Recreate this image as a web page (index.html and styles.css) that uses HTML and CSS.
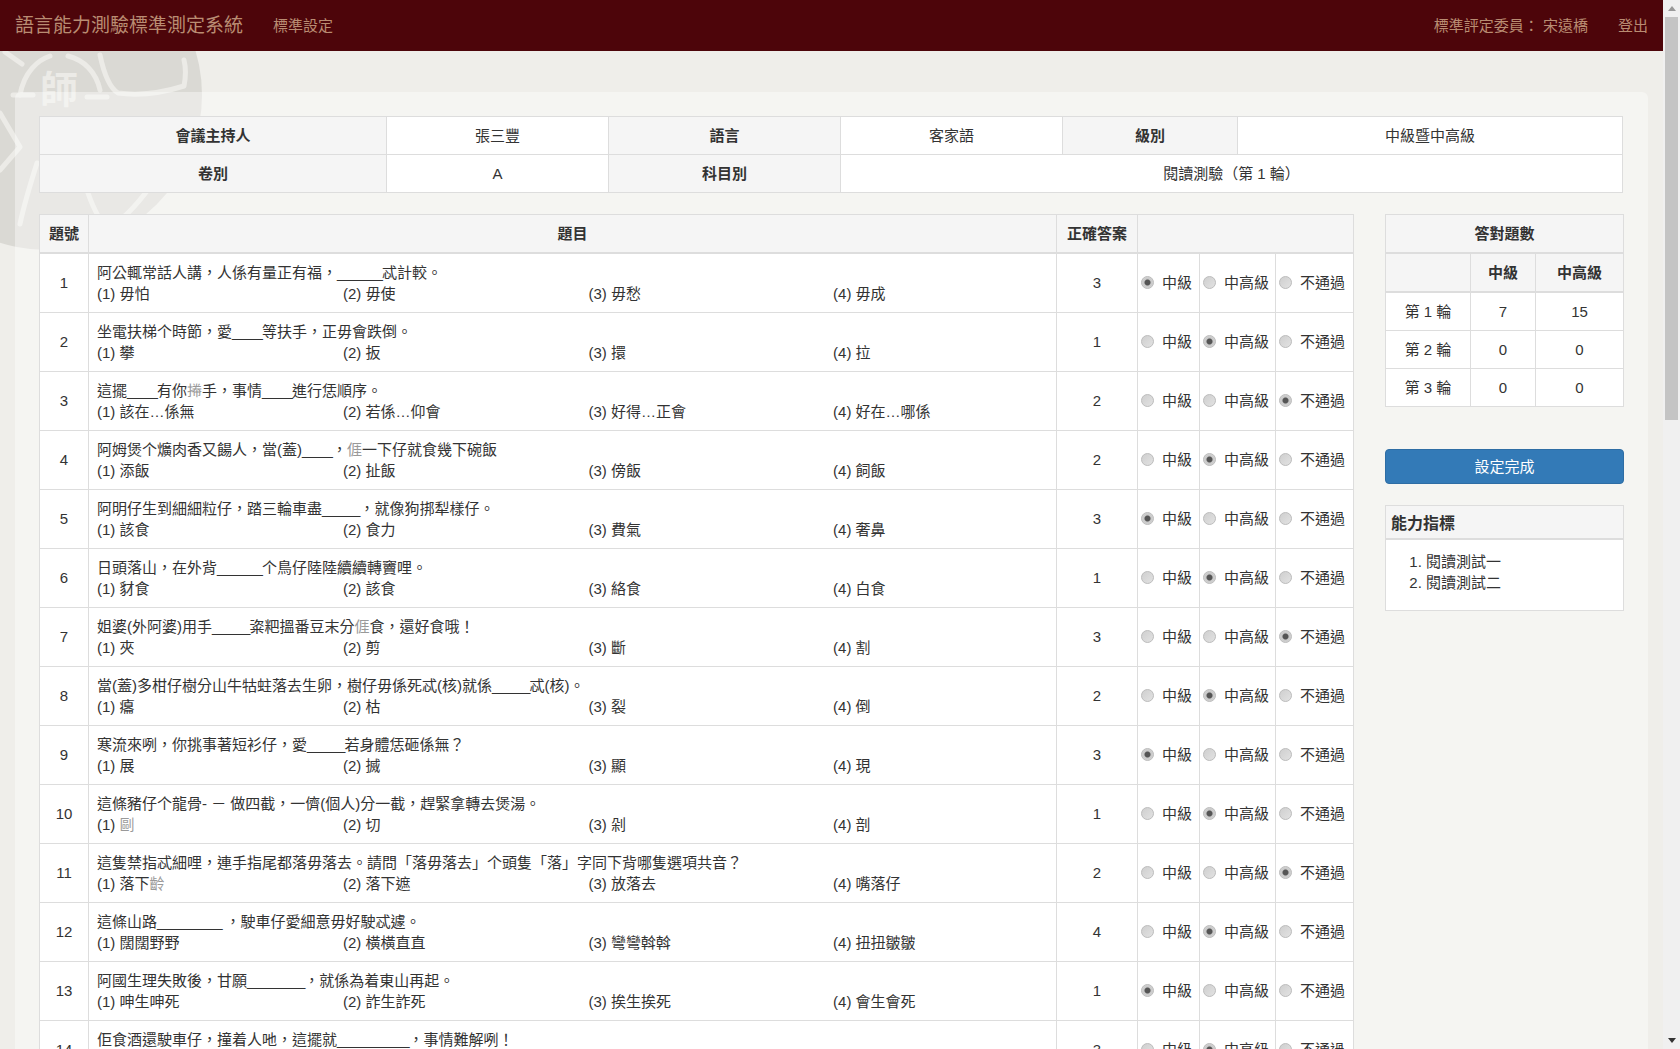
FILE: index.html
```html
<!DOCTYPE html>
<html lang="zh-Hant">
<head>
    <meta charset="UTF-8">
    <meta name="viewport" content="width=device-width, initial-scale=1.0">
    <title>語言能力測驗標準測定系統</title>
    <link rel="stylesheet" href="styles.css">
</head>
<body>
    <!-- school seal behind the page -->
    <svg class="seal" width="210" height="260" viewBox="0 0 210 260" aria-hidden="true">
        <circle cx="47" cy="95" r="155" fill="#dad9d4"/>
        <g fill="none" stroke="#ecebe7" stroke-width="5" stroke-linecap="round" stroke-linejoin="round">
            <path d="M20 95 C24 72 38 60 50 56"/>
            <path d="M68 56 C84 60 96 72 100 90"/>
            <path d="M13 95 H33"/>
            <path d="M87 97 H107"/>
            <path d="M100 55 C104 74 110 88 118 93 C140 96 165 92 184 86 C186 76 186 68 184 60"/>
            <path d="M0 113 L20 147 L0 170"/>
            <path d="M37 163 C30 185 24 205 20 224"/>
            <path d="M88 193 C94 210 100 222 108 228 C120 222 136 206 150 187"/>
            <path d="M5 52 L22 64"/>
            <path d="M72 125 H125"/>
        </g>
        <text class="seal-char" x="40" y="103">師</text>
    </svg>

    <div class="page">
        <nav class="navbar">
            <a class="brand" href="#">語言能力測驗標準測定系統</a>
            <a class="nav-link" href="#">標準設定</a>
            <div class="nav-right">
                <span class="nav-link">標準評定委員： 宋遠橋</span>
                <a class="nav-link" href="#">登出</a>
            </div>
        </nav>

        <div class="panel">
            <table class="grid info-table">
                <colgroup>
                    <col class="i1"><col class="i2"><col class="i3"><col class="i4"><col class="i5"><col>
                </colgroup>
                <tr>
                    <th>會議主持人</th><td>張三豐</td>
                    <th>語言</th><td>客家語</td>
                    <th>級別</th><td>中級暨中高級</td>
                </tr>
                <tr>
                    <th>卷別</th><td>A</td>
                    <th>科目別</th><td colspan="3">閱讀測驗（第 1 輪）</td>
                </tr>
            </table>

            <div class="content">
                <table class="grid question-table">
                    <colgroup>
                        <col class="q-no"><col><col class="q-ans"><col class="q-r1"><col class="q-r2"><col class="q-r3">
                    </colgroup>
                    <thead>
                        <tr><th>題號</th><th>題目</th><th>正確答案</th><th colspan="3"></th></tr>
                    </thead>
                    <tbody>
                        <tr>
                            <td>1</td>
                            <td class="question">阿公輒常話人講，人係有量正有福，<span class="blank">______</span>忒計較。
                                <div class="options"><span>(1) 毋怕</span><span>(2) 毋使</span><span>(3) 毋愁</span><span>(4) 毋成</span></div></td>
                            <td>3</td>
                            <td class="level"><label><input type="radio" name="q1" checked>中級</label></td>
                            <td class="level"><label><input type="radio" name="q1">中高級</label></td>
                            <td class="level"><label><input type="radio" name="q1">不通過</label></td>
                        </tr>
                        <tr>
                            <td>2</td>
                            <td class="question">坐電扶梯个時節，愛<span class="blank">____</span>等扶手，正毋會跌倒。
                                <div class="options"><span>(1) 攀</span><span>(2) 扳</span><span>(3) 擐</span><span>(4) 拉</span></div></td>
                            <td>1</td>
                            <td class="level"><label><input type="radio" name="q2">中級</label></td>
                            <td class="level"><label><input type="radio" name="q2" checked>中高級</label></td>
                            <td class="level"><label><input type="radio" name="q2">不通過</label></td>
                        </tr>
                        <tr>
                            <td>3</td>
                            <td class="question">這擺<span class="blank">____</span>有你<span class="rare">𢯭</span>手，事情<span class="blank">____</span>進行恁順序。
                                <div class="options"><span>(1) 該在…係無</span><span>(2) 若係…仰會</span><span>(3) 好得…正會</span><span>(4) 好在…哪係</span></div></td>
                            <td>2</td>
                            <td class="level"><label><input type="radio" name="q3">中級</label></td>
                            <td class="level"><label><input type="radio" name="q3">中高級</label></td>
                            <td class="level"><label><input type="radio" name="q3" checked>不通過</label></td>
                        </tr>
                        <tr>
                            <td>4</td>
                            <td class="question">阿姆煲个爌肉香又餳人，當(蓋)<span class="blank">____</span>，<span class="rare">𠊎</span>一下仔就食幾下碗飯
                                <div class="options"><span>(1) 添飯</span><span>(2) 扯飯</span><span>(3) 傍飯</span><span>(4) 飼飯</span></div></td>
                            <td>2</td>
                            <td class="level"><label><input type="radio" name="q4">中級</label></td>
                            <td class="level"><label><input type="radio" name="q4" checked>中高級</label></td>
                            <td class="level"><label><input type="radio" name="q4">不通過</label></td>
                        </tr>
                        <tr>
                            <td>5</td>
                            <td class="question">阿明仔生到細細粒仔，踏三輪車盡<span class="blank">_____</span>，就像狗挷犁樣仔。
                                <div class="options"><span>(1) 該食</span><span>(2) 食力</span><span>(3) 費氣</span><span>(4) 奢鼻</span></div></td>
                            <td>3</td>
                            <td class="level"><label><input type="radio" name="q5" checked>中級</label></td>
                            <td class="level"><label><input type="radio" name="q5">中高級</label></td>
                            <td class="level"><label><input type="radio" name="q5">不通過</label></td>
                        </tr>
                        <tr>
                            <td>6</td>
                            <td class="question">日頭落山，在外背<span class="blank">______</span>个鳥仔陸陸續續轉竇哩。
                                <div class="options"><span>(1) 豺食</span><span>(2) 該食</span><span>(3) 絡食</span><span>(4) 白食</span></div></td>
                            <td>1</td>
                            <td class="level"><label><input type="radio" name="q6">中級</label></td>
                            <td class="level"><label><input type="radio" name="q6" checked>中高級</label></td>
                            <td class="level"><label><input type="radio" name="q6">不通過</label></td>
                        </tr>
                        <tr>
                            <td>7</td>
                            <td class="question">姐婆(外阿婆)用手<span class="blank">_____</span>粢粑搵番豆末分<span class="rare">𠊎</span>食，還好食哦！
                                <div class="options"><span>(1) 夾</span><span>(2) 剪</span><span>(3) 斷</span><span>(4) 割</span></div></td>
                            <td>3</td>
                            <td class="level"><label><input type="radio" name="q7">中級</label></td>
                            <td class="level"><label><input type="radio" name="q7">中高級</label></td>
                            <td class="level"><label><input type="radio" name="q7" checked>不通過</label></td>
                        </tr>
                        <tr>
                            <td>8</td>
                            <td class="question">當(蓋)多柑仔樹分山牛牯蛀落去生卵，樹仔毋係死忒(核)就係<span class="blank">_____</span>忒(核)。
                                <div class="options"><span>(1) 癟</span><span>(2) 枯</span><span>(3) 裂</span><span>(4) 倒</span></div></td>
                            <td>2</td>
                            <td class="level"><label><input type="radio" name="q8">中級</label></td>
                            <td class="level"><label><input type="radio" name="q8" checked>中高級</label></td>
                            <td class="level"><label><input type="radio" name="q8">不通過</label></td>
                        </tr>
                        <tr>
                            <td>9</td>
                            <td class="question">寒流來咧，你挑事著短衫仔，愛<span class="blank">_____</span>若身體恁砸係無？
                                <div class="options"><span>(1) 展</span><span>(2) 搣</span><span>(3) 顯</span><span>(4) 現</span></div></td>
                            <td>3</td>
                            <td class="level"><label><input type="radio" name="q9" checked>中級</label></td>
                            <td class="level"><label><input type="radio" name="q9">中高級</label></td>
                            <td class="level"><label><input type="radio" name="q9">不通過</label></td>
                        </tr>
                        <tr>
                            <td>10</td>
                            <td class="question">這條豬仔个龍骨- － 做四截，一儕(個人)分一截，趕緊拿轉去煲湯。
                                <div class="options"><span>(1) <span class="rare">剾</span></span><span>(2) 切</span><span>(3) 剁</span><span>(4) 剖</span></div></td>
                            <td>1</td>
                            <td class="level"><label><input type="radio" name="q10">中級</label></td>
                            <td class="level"><label><input type="radio" name="q10" checked>中高級</label></td>
                            <td class="level"><label><input type="radio" name="q10">不通過</label></td>
                        </tr>
                        <tr>
                            <td>11</td>
                            <td class="question">這隻禁指忒細哩，連手指尾都落毋落去。請問「落毋落去」个頭隻「落」字同下背哪隻選項共音？
                                <div class="options"><span>(1) 落下<span class="rare">齡</span></span><span>(2) 落下遮</span><span>(3) 放落去</span><span>(4) 嘴落仔</span></div></td>
                            <td>2</td>
                            <td class="level"><label><input type="radio" name="q11">中級</label></td>
                            <td class="level"><label><input type="radio" name="q11">中高級</label></td>
                            <td class="level"><label><input type="radio" name="q11" checked>不通過</label></td>
                        </tr>
                        <tr>
                            <td>12</td>
                            <td class="question">這條山路<span class="blank-long">_________</span> ，駛車仔愛細意毋好駛忒遽。
                                <div class="options"><span>(1) 闊闊野野</span><span>(2) 橫橫直直</span><span>(3) 彎彎斡斡</span><span>(4) 扭扭皺皺</span></div></td>
                            <td>4</td>
                            <td class="level"><label><input type="radio" name="q12">中級</label></td>
                            <td class="level"><label><input type="radio" name="q12" checked>中高級</label></td>
                            <td class="level"><label><input type="radio" name="q12">不通過</label></td>
                        </tr>
                        <tr>
                            <td>13</td>
                            <td class="question">阿國生理失敗後，甘願<span class="blank-long">________</span>，就係為着東山再起。
                                <div class="options"><span>(1) 呻生呻死</span><span>(2) 詐生詐死</span><span>(3) 挨生挨死</span><span>(4) 會生會死</span></div></td>
                            <td>1</td>
                            <td class="level"><label><input type="radio" name="q13" checked>中級</label></td>
                            <td class="level"><label><input type="radio" name="q13">中高級</label></td>
                            <td class="level"><label><input type="radio" name="q13">不通過</label></td>
                        </tr>
                        <tr>
                            <td>14</td>
                            <td class="question">佢食酒還駛車仔，撞着人吔，這擺就<span class="blank-long">__________</span>，事情難解咧！
                                <div class="options"></div></td>
                            <td>3</td>
                            <td class="level"><label><input type="radio" name="q14">中級</label></td>
                            <td class="level"><label><input type="radio" name="q14" checked>中高級</label></td>
                            <td class="level"><label><input type="radio" name="q14">不通過</label></td>
                        </tr>
                    </tbody>
                </table>

                <aside class="sidebar">
                    <table class="grid score-table">
                        <colgroup><col class="s1"><col class="s2"><col></colgroup>
                        <thead>
                            <tr><th colspan="3">答對題數</th></tr>
                            <tr><th></th><th>中級</th><th>中高級</th></tr>
                        </thead>
                        <tbody>
                            <tr><td>第 1 輪</td><td>7</td><td>15</td></tr>
                            <tr><td>第 2 輪</td><td>0</td><td>0</td></tr>
                            <tr><td>第 3 輪</td><td>0</td><td>0</td></tr>
                        </tbody>
                    </table>

                    <button class="btn-done" type="button">設定完成</button>

                    <div class="indicator">
                        <div class="indicator-heading">能力指標</div>
                        <ol class="indicator-list">
                            <li>閱讀測試一</li>
                            <li>閱讀測試二</li>
                        </ol>
                    </div>
                </aside>
            </div>
        </div>
    </div>

    <!-- window scrollbar as in the screenshot -->
    <div class="scrollbar" aria-hidden="true">
        <div class="sb-button"><span class="sb-up"></span></div>
        <div class="sb-thumb"></div>
        <div class="sb-button sb-end"><span class="sb-down"></span></div>
    </div>
</body>
</html>
```

FILE: styles.css
```css
body {
    display: flex;
    height: 100vh;
    overflow: hidden;
    font-family: "Liberation Sans", "Noto Sans CJK TC", sans-serif;
    font-size: 15px;
    line-height: 21px;
    color: #333;
    margin: 0;
    background-color: #efeeea;
}

.page {
    flex: 1;
    min-width: 0;
    overflow: hidden;
}

.seal {
    position: absolute;
    top: 0;
    left: 0;
    z-index: -1;
}

.seal-char {
    font-size: 38px;
    font-weight: 700;
    fill: #ecebe7;
}

.scrollbar {
    display: flex;
    flex-direction: column;
    flex: none;
    width: 17px;
    background-color: #f0f0f0;
}

.sb-button {
    display: flex;
    align-items: center;
    justify-content: center;
    height: 17px;
}

.sb-end {
    margin-top: auto;
}

.sb-up {
    border-left: 4.5px solid transparent;
    border-right: 4.5px solid transparent;
    border-bottom: 5px solid #999;
}

.sb-down {
    border-left: 4.5px solid transparent;
    border-right: 4.5px solid transparent;
    border-top: 5px solid #333;
}

.sb-thumb {
    height: 403px;
    margin: 0 2px;
    background-color: #c4c4c4;
}

.navbar {
    display: flex;
    align-items: center;
    height: 51px;
    padding: 0 15px;
    background-color: #4d050a;
}

.brand {
    font-size: 19px;
    color: #b98c72;
    text-decoration: none;
    margin-right: 30px;
}

.nav-link {
    color: #b98c72;
    text-decoration: none;
}

.nav-right {
    display: flex;
    gap: 30px;
    margin-left: auto;
}

.panel {
    margin: 41px 15px 0;
    padding: 24px 24px;
    background-color: rgba(255, 255, 255, 0.4);
    border-radius: 6px 6px 0 0;
}

.grid {
    border-collapse: collapse;
    table-layout: fixed;
    background-color: #fff;
}

.grid th,
.grid td {
    padding: 8px;
    border: 1px solid #ddd;
    text-align: center;
    vertical-align: middle;
}

.grid th {
    background-color: #f5f5f5;
    font-weight: 700;
}

.grid thead th {
    border-bottom-width: 2px;
}

.info-table {
    width: 1584px;
}

.i1 { width: 347px; }
.i2 { width: 222px; }
.i3 { width: 232px; }
.i4 { width: 222px; }
.i5 { width: 175px; }

.content {
    display: flex;
    align-items: flex-start;
    gap: 31px;
    width: 1585px;
    margin-top: 21px;
}

.question-table {
    width: 1315px;
    flex: none;
}

.q-no { width: 49px; }
.q-ans { width: 81px; }
.q-r1 { width: 62px; }
.q-r2 { width: 76px; }
.q-r3 { width: 78px; }

/* numbers and radios sit a pixel above the row centre */
.question-table tbody td {
    padding: 7px 8px 9px;
}

.question-table tbody td.question {
    padding: 8px;
    text-align: left;
}

.options {
    display: grid;
    grid-template-columns: 246px 245.5px 244.6px 1fr;
    min-height: 21px;
}

.blank {
    letter-spacing: -0.84px;
}

.blank-long {
    letter-spacing: -1.2px;
}

.rare {
    color: #999;
}

.question-table tbody td.level {
    padding: 7px 3px 9px;
    text-align: left;
    white-space: nowrap;
}

.level label {
    display: flex;
    align-items: center;
    gap: 8px;
}

.level input {
    appearance: none;
    flex: none;
    width: 13px;
    height: 13px;
    margin: 0;
    border: 1px solid #bdbdbd;
    border-radius: 50%;
    background: linear-gradient(135deg, #cfcfcf, #e2e2e2);
}

.level input:checked {
    background: radial-gradient(circle, #555 0, #555 2.5px, #c8c8c8 3.5px, #dcdcdc 100%);
}

.sidebar {
    flex: 1;
}

.score-table {
    width: 100%;
}

.s1 { width: 85px; }
.s2 { width: 65px; }

.btn-done {
    display: block;
    width: 100%;
    height: 35px;
    margin-top: 42px;
    padding: 0;
    font: inherit;
    color: #fff;
    background-color: #337ab7;
    border: 1px solid #2e6da4;
    border-radius: 4px;
    cursor: pointer;
}

.indicator {
    margin-top: 21px;
    background-color: #fff;
    border: 1px solid #ddd;
}

.indicator-heading {
    height: 30px;
    padding: 2px 0 0 5px;
    font-size: 16px;
    font-weight: 700;
    line-height: 31px;
    background-color: #f5f5f5;
    border-bottom: 2px solid #ddd;
}

.indicator-list {
    margin: 0;
    padding: 11px 0 17px 40px;
}
```
